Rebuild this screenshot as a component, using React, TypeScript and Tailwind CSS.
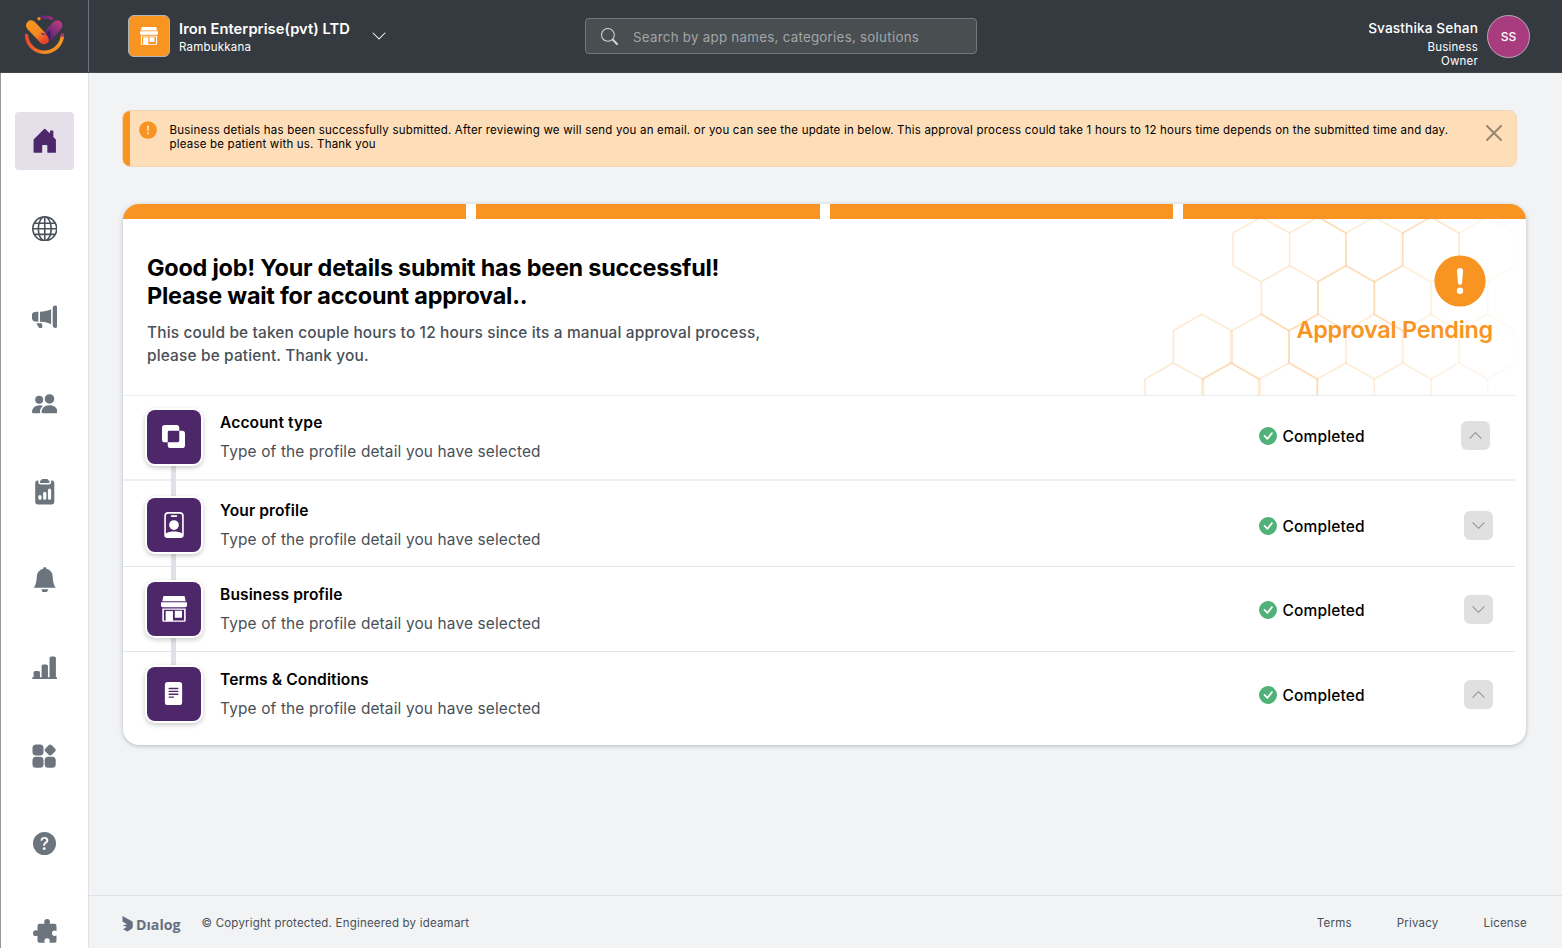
import {
  BsBarChartLineFill,
  BsBellFill,
  BsCheckCircleFill,
  BsChevronDown,
  BsChevronUp,
  BsClipboard2DataFill,
  BsExclude,
  BsFileTextFill,
  BsGlobe,
  BsHouseDoorFill,
  BsMegaphoneFill,
  BsPeopleFill,
  BsPersonBadge,
  BsQuestionCircleFill,
  BsSearch,
} from 'react-icons/bs';

type IconProps = { className?: string };

function ShopIcon({ className }: IconProps) {
  return (
    <svg viewBox="0 0 26 26" fill="currentColor" className={className}>
      <path d="M3.2 0h19.6a1 1 0 0 1 1 .8l.9 4.4H1.3L2.2.8A1 1 0 0 1 3.2 0Z" />
      <path d="M0 6.3h26v3.2a1.8 1.8 0 0 1-1.8 1.8H1.8A1.8 1.8 0 0 1 0 9.5Z" />
      <path
        fillRule="evenodd"
        d="M1.3 12.6h23.4V24.6a1.2 1.2 0 0 1-1.2 1.2h-21a1.2 1.2 0 0 1-1.2-1.2ZM2.9 13.8V24.4H4.8V15.2H11.9V24.4H23.1V13.8Z"
      />
      <path d="M4.8 15.2H11.9V25H4.8ZM13.8 14.8H21V21.8H13.8Z" />
    </svg>
  );
}

function AppsIcon({ className }: IconProps) {
  return (
    <svg viewBox="0 0 24 24" fill="currentColor" className={className}>
      <rect x="0.5" y="0.5" width="11" height="11" rx="3.5" />
      <rect x="0.5" y="12.7" width="11" height="11" rx="3.5" />
      <rect x="12.7" y="12.7" width="11" height="11" rx="3.5" />
      <rect x="13.7" y="1.5" width="9" height="9" rx="2.2" transform="rotate(45 18.2 6)" />
    </svg>
  );
}

function PuzzleIcon({ className }: IconProps) {
  return (
    <svg viewBox="0 0 24 24" fill="currentColor" className={className}>
      <path d="M6.5 4.8H11.7C11.4 4.2 11.2 3.7 11.2 3A2.9 2.9 0 0 1 17 3C17 3.7 16.8 4.2 16.5 4.8H21.5A2 2 0 0 1 23.5 6.8V12C22.8 11.7 22.3 11.5 21.7 11.5A2.7 2.7 0 0 0 21.7 16.9C22.3 16.9 22.8 16.7 23.5 16.4V21.8A2 2 0 0 1 21.5 23.8H16.3C16.6 23.2 16.8 22.6 16.8 22A2.7 2.7 0 0 0 11.4 22C11.4 22.6 11.6 23.2 11.9 23.8H6.5A2 2 0 0 1 4.5 21.8V16.7C3.9 17 3.4 17.1 2.9 17.1A2.9 2.9 0 0 1 2.9 11.3C3.4 11.3 3.9 11.4 4.5 11.7V6.8A2 2 0 0 1 6.5 4.8Z" />
    </svg>
  );
}

/* Mark takes the text colour, disc is always brand orange */
function AlertIcon({ className }: IconProps) {
  return (
    <svg viewBox="0 0 52 52" fill="currentColor" className={className}>
      <circle cx="26" cy="26" r="25.6" fill="#f89522" />
      <path d="M23 16a3 3 0 0 1 6 0l-.9 11.8a2.1 2.1 0 0 1-4.2 0Z" />
      <circle cx="26" cy="35.7" r="3.2" />
    </svg>
  );
}

function BrandLogo({ className }: IconProps) {
  return (
    <svg viewBox="0 0 42 42" fill="none" strokeLinecap="round" className={className}>
      <defs>
        <linearGradient id="smile" x1="2" y1="20" x2="40" y2="20" gradientUnits="userSpaceOnUse">
          <stop offset="0" stopColor="#e8412d" />
          <stop offset="0.5" stopColor="#f28a22" />
          <stop offset="1" stopColor="#f5961f" />
        </linearGradient>
        <linearGradient id="armLeft" x1="6" y1="8" x2="22" y2="26" gradientUnits="userSpaceOnUse">
          <stop offset="0" stopColor="#f7941e" />
          <stop offset="0.6" stopColor="#f28a22" />
          <stop offset="1" stopColor="#e8452c" />
        </linearGradient>
        <linearGradient id="armRight" x1="35" y1="8" x2="21" y2="24" gradientUnits="userSpaceOnUse">
          <stop offset="0" stopColor="#b5387f" />
          <stop offset="0.6" stopColor="#6f2b78" />
          <stop offset="1" stopColor="#3a226a" />
        </linearGradient>
        <linearGradient id="cap" x1="16" y1="3" x2="29" y2="3" gradientUnits="userSpaceOnUse">
          <stop offset="0" stopColor="#4d2a6f" />
          <stop offset="1" stopColor="#9a3079" />
        </linearGradient>
      </defs>
      <path d="M3.5 21.5A18 18 0 0 0 39.3 22.500" stroke="url(#smile)" strokeWidth="3.5" />
      <circle cx="39.4" cy="21" r="1.9" fill="#a3347d" />
      <path d="M17.5 3.7Q23 2.4 28.5 4.400" stroke="url(#cap)" strokeWidth="3.2" />
      <circle cx="16" cy="4.8" r="1.7" fill="#f28a22" />
      <path d="M34.2 11.5L25 22" stroke="url(#armRight)" strokeWidth="10.5" />
      <path d="M8.2 11.5L21 25" stroke="url(#armLeft)" strokeWidth="10.5" />
      <path d="M17.8 19.3c1.5 2 4 1.8 6-.2l3.5-3.5v8l-1.5 3c0-5-3-7.5-8-7.3Z" fill="#3a226a" />
    </svg>
  );
}

/* Faint honeycomb behind the approval status */
function Honeycomb({ className }: IconProps) {
  return (
    <svg viewBox="0 0 375 176" fill="none" className={className}>
      <defs>
        <linearGradient id="combLight" x1="0" y1="0" x2="375" y2="0" gradientUnits="userSpaceOnUse">
          <stop offset="0" stopColor="#f89522" stopOpacity="0.2" />
          <stop offset="0.7" stopColor="#f89522" stopOpacity="0.17" />
          <stop offset="1" stopColor="#f89522" stopOpacity="0.04" />
        </linearGradient>
      </defs>
      <g stroke="url(#combLight)" strokeWidth="1.7">
        <path d="M93 14L121.3 -2L149.7 14L178 -2L206 14L234.3 -2L262.7 14L291 -2L319 14L347.7 -2L375.3 14" />
        <path d="M93 14V46.7M149.7 14V46.7M206 14V46.7M262.7 14V46.7M319 14V46.7M375 14V46.7" />
        <path d="M93 46.7L121.3 62.7L149.7 46.7L178 62.7L206 46.7L234.3 62.7L262.7 46.7L291 62.7L319 46.7L347.7 62.7L375.3 46.7" />
        <path d="M121.3 62.7V95.3M178 62.7V95.3M234.3 62.7V95.3M291 62.7V95.3M347.7 62.7V95.3" />
        <path d="M33.3 111.7L61.7 95.3L91.7 111.7L121.3 95.3L149 111.7L178 95.3L206 111.7L234.3 95.3L262.7 111.7L291 95.3L319 111.7L347.7 95.3L375.3 111.7" />
        <path d="M33.3 111.7V144M149 111.7V144M206 111.7V144M262.7 111.7V144M319 111.7V144M375 111.7V144" />
        <path d="M5 160L33.3 144L62.7 160L91 144L119.3 160L149 144L177.3 160L206 144L234.3 160L262.7 144L291 160L319 144L347.7 160L375.3 144" />
        <path d="M5 160V177M177.3 160V177M234.3 160V177M291 160V177M347.7 160V177" />
      </g>
      {/* doubled edges where cells overlap */}
      <g stroke="url(#combLight)" strokeWidth="3.4">
        <path d="M91.5 111.7V144M62.7 160V177M119.3 160V177" />
      </g>
      <g stroke="url(#combLight)" strokeWidth="1.8">
        <path d="M178 -2L206 14V46.7L234.3 62.7L262.7 46.7V14L291 -2L319 14V46.7" />
        <path d="M206 46.7L178 62.7V95.3L149 111.7V144L177.3 160V177M149 111.7L121.3 95.3" />
        <path d="M234.3 62.7V95.3L262.7 111.7M62.7 160L91 144L119.3 160" />
      </g>
    </svg>
  );
}

function DialogLogo() {
  return (
    <div className="flex items-center text-[#667080]">
      <svg viewBox="0 0 12 16" fill="currentColor" className="h-4 w-3">
        <path d="M0.5 0L10 5.2Q11 6 10.8 8V10Q11 12 9.5 13L5.5 15.6L1 13.3L4.8 10.9L0.8 9.4L5 8.2L0.5 5.5Z" />
      </svg>
      <span className="ml-[2px] mt-[2px] font-['Open_Sans',sans-serif] text-[14.2px] leading-4 font-bold tracking-[0px]">Dıalog</span>
    </div>
  );
}

const navItems = [
  { icon: BsHouseDoorFill, className: 'size-[27.5px] text-[#4e276b]', active: true },
  { icon: BsGlobe, className: 'size-[25.5px] text-[#495057]' },
  { icon: BsMegaphoneFill, className: 'size-[25.5px]' },
  { icon: BsPeopleFill, className: 'size-[25.5px]' },
  { icon: BsClipboard2DataFill, className: 'size-[25.5px]' },
  { icon: BsBellFill, className: 'size-[25.5px]' },
  { icon: BsBarChartLineFill, className: 'size-[25.5px]' },
  { icon: AppsIcon, className: 'mt-px size-[24px]' },
  { icon: BsQuestionCircleFill, className: 'size-[23px]' },
  { icon: PuzzleIcon, className: 'ml-px mt-px size-[24px]' },
];

const steps = [
  { title: 'Account type', icon: BsExclude, iconClass: 'size-[23px] -ml-px -mt-px', row: 'h-[85px] pt-[14px] border-b-2 border-[#eeeff1]', status: 'pt-[14px] mr-[-3px]', toggle: 'mr-[25px] mt-[11px]', open: true },
  { title: 'Your profile', icon: BsPersonBadge, iconClass: 'size-[26px] -ml-px', row: 'h-[86px] pt-[17px] border-b border-[#e3e6e8]', status: 'pt-[18px]', toggle: 'mr-[22px] mt-[13px]', open: false },
  { title: 'Business profile', icon: ShopIcon, iconClass: 'size-[26px]', row: 'h-[85px] pt-[15px] border-b border-[#e3e6e8]', status: 'pt-[18px]', toggle: 'mr-[22px] mt-[13px]', open: false },
  { title: 'Terms & Conditions', icon: BsFileTextFill, iconClass: 'size-[23px] -ml-px -mt-px', row: 'h-[93px] pt-[15px]', status: 'pt-[18px]', toggle: 'mr-[22px] mt-[13px]', open: true },
];

const connectors = ['top-[54px] h-[34px]', 'top-[54px] h-[30px]', 'top-[54px] h-[31px]'];

function Header() {
  return (
    <header className="flex h-[73px] shrink-0 border-b border-[#41464b] bg-[#353a40] text-white">
      <div className="flex w-[89px] shrink-0 justify-center border-r border-[#6c757d] pt-[14px]">
        <BrandLogo className="size-[42px]" />
      </div>
      <div className="flex w-[496px] shrink-0 pl-[39px] pt-[15px]">
        <div className="flex size-[42px] items-center justify-center rounded-md border border-[#adb5bd] bg-[#f89522]">
          <ShopIcon className="size-[18px]" />
        </div>
        <div className="ml-[9px] pt-[5px]">
          <p className="text-[14.7px] leading-[19px] font-semibold tracking-[0.06px] whitespace-nowrap">Iron Enterprise(pvt) LTD</p>
          <p className="text-[11.5px] leading-[17px] tracking-[0.2px]">Rambukkana</p>
        </div>
        <BsChevronDown className="ml-[21px] mt-[13px] size-4" />
      </div>
      <div className="mt-[18px] flex h-[36px] w-[392px] shrink-0 items-center rounded border border-[#73787c] bg-[#494e51] pl-[15px]">
        <BsSearch className="size-[17px] text-[#ced1d4]" />
        <span className="ml-[15px] mt-[3px] text-[13.3px] tracking-[0.28px] text-[#a3a6a8]">Search by app names, categories, solutions</span>
      </div>
      <div className="ml-auto mr-[32px] flex pt-[14px]">
        <div className="pt-[4px] text-right">
          <p className="text-[13.7px] leading-[20px] font-medium tracking-[0.1px]">Svasthika Sehan</p>
          <p className="ml-auto mt-[2px] w-[60px] text-[11.5px] leading-[14px] tracking-[0.2px]">Business Owner</p>
        </div>
        <div className="ml-[9px] mt-px flex size-[43px] items-center justify-center rounded-full border-[1.5px] border-[#b9aab5] bg-[#a93c7e] pt-px text-[12px] font-medium">
          SS
        </div>
      </div>
    </header>
  );
}

function Sidebar() {
  return (
    <nav className="flex w-[89px] shrink-0 flex-col items-center gap-[29.3px] overflow-hidden border-r border-l border-r-[#dee2e6] border-l-[#979797] bg-white pt-[38.5px] pr-[0.5px] text-[#6c757d]">
      {navItems.map(({ icon: Icon, className, active }, i) => (
        <a
          key={i}
          className={`flex size-[58.5px] shrink-0 items-center justify-center rounded ${active ? 'bg-[#e4dfe9]' : ''}`}
        >
          <Icon className={className} />
        </a>
      ))}
    </nav>
  );
}

function Notice() {
  return (
    <div className="flex h-[57px] w-[1395px] overflow-hidden rounded-lg border border-[#f3d7b5] bg-[#fedeb8]">
      <div className="w-[7px] shrink-0 bg-[#f89522]" />
      <AlertIcon className="ml-[9.5px] mt-[10px] size-[18px] shrink-0 text-[#fedeb8]" />
      <p className="ml-[12.5px] mt-[12px] text-[11.5px] leading-[14px] tracking-[0.2px] whitespace-nowrap text-black">
        Business detials has been successfully submitted. After reviewing we will send you an email. or you can see the
        update in below. This approval process could take 1 hours to 12 hours time depends on the submitted time and day.
        <br />
        please be patient with us. Thank you
      </p>
      <svg viewBox="0 0 16 16" stroke="#998570" strokeWidth="2" strokeLinecap="round" className="ml-auto mr-[14px] mt-[14px] size-4 shrink-0">
        <path d="M1 1L15 15M15 1L1 15" />
      </svg>
    </div>
  );
}

function StatusCard() {
  return (
    <section className="mt-[37px] h-[541px] w-[1403px] overflow-hidden rounded-2xl bg-white shadow-[0_1px_4px_rgba(73,80,87,0.35)]">
      <div className="flex h-[15px] gap-[10px]">
        <div className="flex-1 bg-[#f89522]" />
        <div className="flex-1 bg-[#f89522]" />
        <div className="flex-1 bg-[#f89522]" />
        <div className="flex-1 bg-[#f89522]" />
      </div>
      <div className="relative mr-[11px] flex h-[177px] justify-between border-b border-[#e9ecef] pl-[24px]">
        <Honeycomb className="absolute top-0 right-0 h-[176px] w-[375px]" />
        <div className="relative pt-[35px]">
          <h1 className="text-[23.4px] leading-[28px] font-bold tracking-[-0.22px] whitespace-nowrap text-black">
            Good job! Your details submit has been successful!
            <br />
            Please wait for account approval..
          </h1>
          <p className="mt-[11px] text-[15.4px] leading-[23px] font-medium tracking-[0.17px] whitespace-nowrap text-[#495057]">
            This could be taken couple hours to 12 hours since its a manual approval process,
            <br />
            please be patient. Thank you.
          </p>
        </div>
        <div className="relative flex flex-col items-end pt-[35.5px] pr-[22px]">
          <AlertIcon className="mr-[7.5px] size-[52px] text-white" />
          <p className="mt-[9.5px] text-[23.4px] leading-[28px] font-semibold tracking-[-0.25px] whitespace-nowrap text-[#f89522]">Approval Pending</p>
        </div>
      </div>
      {steps.map(({ title, icon: Icon, iconClass, row, status, toggle, open }, i) => (
        <div key={title} className={`mr-[11px] flex pl-[24px] ${row}`}>
          <div className="relative size-[54px] shrink-0">
            {i < 3 && <div className={`absolute left-[24px] w-[5px] bg-[#dee2e6] ${connectors[i]}`} />}
            <div className="relative flex size-[54px] items-center justify-center rounded-lg bg-[#4e276b] text-white shadow-[0_0_0_2px_#fff,0_2px_5px_2px_rgba(0,0,0,0.2)]">
              <Icon className={iconClass} />
            </div>
          </div>
          <div className="ml-[19px]">
            <h2 className="mt-[2px] text-[15.6px] leading-[22px] font-semibold tracking-[0.1px] text-black">{title}</h2>
            <p className="mt-[7px] text-[15.4px] leading-[22px] tracking-[0.16px] text-[#495057]">Type of the profile detail you have selected</p>
          </div>
          <div className="ml-auto flex">
            <div className={`flex h-[38px] w-[205px] items-center ${status}`}>
              <BsCheckCircleFill className="size-[18px] text-[#50b278]" />
              <span className="ml-[5.5px] mt-px text-[15.5px] font-medium tracking-[0.15px] text-black">Completed</span>
            </div>
            <div className={`flex size-[29px] items-center justify-center rounded-md bg-[#e0e0e0] text-[#8b8b8b] ${toggle}`}>
              {open ? <BsChevronUp className="size-[15px]" /> : <BsChevronDown className="size-[15px]" />}
            </div>
          </div>
        </div>
      ))}
    </section>
  );
}

function Footer() {
  return (
    <footer className="mt-auto flex h-[53px] items-center border-t border-[#dee2e6] pt-[3px] pr-[35px] pl-[33px] text-[11.5px] tracking-[0.2px] text-[#495057]">
      <DialogLogo />
      <span className="ml-[21px]">© Copyright protected. Engineered by ideamart</span>
      <div className="ml-auto flex gap-[45px]">
        <a>Terms</a>
        <a>Privacy</a>
        <a>License</a>
      </div>
    </footer>
  );
}

export default function App() {
  return (
    <div className="flex h-[948px] w-[1562px] flex-col overflow-hidden bg-[#f1f3f5] font-['Inter',sans-serif]">
      <Header />
      <div className="flex min-h-0 flex-1">
        <Sidebar />
        <div className="flex min-w-0 flex-1 flex-col">
          <main className="pt-[37px] pl-[33px]">
            <div className="-ml-[0.5px]">
              <Notice />
            </div>
            <div className="pl-px">
              <StatusCard />
            </div>
          </main>
          <Footer />
        </div>
      </div>
    </div>
  );
}
